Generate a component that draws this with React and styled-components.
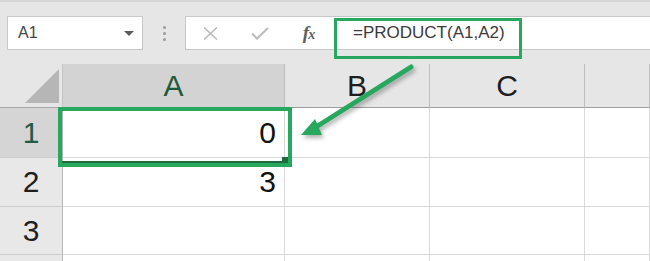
import React from 'react';
import styled, { createGlobalStyle } from 'styled-components';

const GlobalStyle = createGlobalStyle`
  * { box-sizing: border-box; }
  body {
    margin: 0;
    background: #e6e6e6;
    font-family: "Liberation Sans", Arial, sans-serif;
    overflow: hidden;
  }
`;

const Window = styled.div`
  position: relative;
  width: 650px;
  height: 261px;
  overflow: hidden;
  background: #e6e6e6;
  border-top: 2px solid #d6d6d6;
`;

const TopStrip = styled.div`
  height: 14px;
`;

const Toolbar = styled.div`
  display: flex;
  align-items: stretch;
  height: 34px;
  padding-left: 7px;
`;

const NameBox = styled.div`
  width: 136px;
  display: flex;
  align-items: center;
  justify-content: space-between;
  padding: 0 8px 0 10px;
  background: #fff;
  border: 1px solid #c8c8c8;
  font-size: 16px;
  color: #454545;
`;

const Caret = styled.span`
  width: 0;
  height: 0;
  border-left: 5px solid transparent;
  border-right: 5px solid transparent;
  border-top: 5px solid #5a5a5a;
`;

const Grip = styled.div`
  width: 42px;
  display: flex;
  flex-direction: column;
  align-items: center;
  justify-content: center;
  gap: 3px;
  span {
    width: 3px;
    height: 3px;
    border-radius: 50%;
    background: #9a9a9a;
  }
`;

const FormulaBar = styled.div`
  flex: 1;
  display: flex;
  align-items: center;
  background: #fff;
  border: 1px solid #c8c8c8;
  border-right: none;
`;

const BarButton = styled.div`
  width: 49px;
  height: 100%;
  display: flex;
  align-items: center;
  justify-content: center;
`;

const Fx = styled.span`
  font-family: "Liberation Serif", "Times New Roman", serif;
  font-style: italic;
  font-weight: bold;
  font-size: 19px;
  color: #5f5f5f;
  letter-spacing: -1px;
  small {
    font-size: 14px;
  }
`;

const FormulaText = styled.div`
  padding-left: 20px;
  font-size: 17px;
  color: #3a3a3a;
`;

const Gap = styled.div`
  height: 14px;
`;

const Sheet = styled.div`
  display: grid;
  grid-template-columns: 63px 222px 145px 155px 1fr;
  grid-template-rows: 44px 50px 49px 48px 40px;
`;

const Corner = styled.div`
  border-right: 1px solid #c4c4c4;
  border-bottom: 1px solid #a8a8a8;
  display: flex;
  align-items: flex-end;
  justify-content: flex-end;
  padding: 0 3px 4px 0;
`;

const CornerTriangle = styled.div`
  width: 0;
  height: 0;
  border-left: 34px solid transparent;
  border-bottom: 34px solid #b6b6b6;
`;

const ColHeader = styled.div`
  display: flex;
  align-items: center;
  justify-content: center;
  font-size: 30px;
  background: ${p => (p.$active ? '#d3d3d3' : '#e6e6e6')};
  color: ${p => (p.$active ? '#1f5a3a' : '#1e1e1e')};
  border-right: 1px solid #bdbdbd;
  border-bottom: 1px solid #9e9e9e;
`;

const RowHeader = styled.div`
  display: flex;
  align-items: center;
  justify-content: center;
  font-size: 30px;
  background: ${p => (p.$active ? '#d5d5d5' : '#e8e8e8')};
  color: ${p => (p.$active ? '#24594a' : '#1e1e1e')};
  border-right: 1px solid #b4b4b4;
  border-bottom: 1px solid #cdcdcd;
`;

const Cell = styled.div`
  display: flex;
  align-items: center;
  justify-content: flex-end;
  padding-right: 8px;
  background: #fff;
  font-size: 30px;
  color: #111;
  border-right: 1px solid #d9d9d9;
  border-bottom: 1px solid #d9d9d9;
`;

const FormulaHighlight = styled.div`
  position: absolute;
  left: 334px;
  top: 16px;
  width: 188px;
  height: 41px;
  border: 3px solid #27a85e;
`;

const Selection = styled.div`
  position: absolute;
  left: 58px;
  top: 105px;
  width: 234px;
  height: 60px;
  border: 4px solid #27a85e;

  &::before {
    content: '';
    position: absolute;
    left: 0;
    right: 2px;
    bottom: 0;
    height: 2px;
    background: #1f6b40;
  }
  &::after {
    content: '';
    position: absolute;
    right: 0;
    bottom: 0;
    width: 6px;
    height: 6px;
    background: #1f6b40;
  }
`;

const Arrow = styled.svg`
  position: absolute;
  left: 0;
  top: 0;
  overflow: visible;
  filter: drop-shadow(2px 3px 2px rgba(0, 0, 0, 0.3));
`;

const cols = ['A', 'B', 'C', ''];
const rows = [
  { n: '1', vals: ['0', '', '', ''] },
  { n: '2', vals: ['3', '', '', ''] },
  { n: '3', vals: ['', '', '', ''] },
  { n: '', vals: ['', '', '', ''] },
];

export default function App() {
  return (
    <>
      <GlobalStyle />
      <Window>
        <TopStrip />
        <Toolbar>
          <NameBox>
            A1
            <Caret />
          </NameBox>
          <Grip>
            <span />
            <span />
            <span />
          </Grip>
          <FormulaBar>
            <BarButton>
              <svg width="15" height="13" viewBox="0 0 15 13">
                <path d="M1 0.5 L14 12.5 M14 0.5 L1 12.5" stroke="#bcbcbc" strokeWidth="1.6" fill="none" />
              </svg>
            </BarButton>
            <BarButton>
              <svg width="18" height="13" viewBox="0 0 18 13">
                <path d="M1 6.5 L6 11.5 L17 1" stroke="#bcbcbc" strokeWidth="2" fill="none" />
              </svg>
            </BarButton>
            <BarButton>
              <Fx>f<small>x</small></Fx>
            </BarButton>
            <FormulaText>=PRODUCT(A1,A2)</FormulaText>
          </FormulaBar>
        </Toolbar>
        <Gap />
        <Sheet>
          <Corner>
            <CornerTriangle />
          </Corner>
          {cols.map((c, i) => (
            <ColHeader key={i} $active={c === 'A'}>{c}</ColHeader>
          ))}
          {rows.map(r => (
            <React.Fragment key={r.n || 'x'}>
              <RowHeader $active={r.n === '1'}>{r.n}</RowHeader>
              {r.vals.map((v, j) => (
                <Cell key={j}>{v}</Cell>
              ))}
            </React.Fragment>
          ))}
        </Sheet>
        <FormulaHighlight />
        <Selection />
        <Arrow width="650" height="261">
          <line x1="411" y1="65" x2="316" y2="125" stroke="#27a85e" strokeWidth="5" strokeLinecap="round" />
          <polygon points="301,133 315,117 322,133" fill="#27a85e" />
        </Arrow>
      </Window>
    </>
  );
}
